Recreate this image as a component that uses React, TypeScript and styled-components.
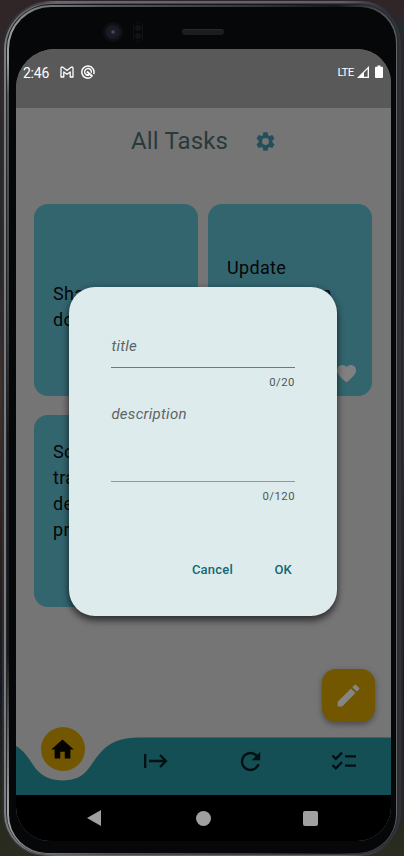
import React from "react";
import styled, { createGlobalStyle, css } from "styled-components";

const GlobalStyle = createGlobalStyle`
  html, body { margin: 0; padding: 0; }
  body { font-family: Roboto, "Liberation Sans", sans-serif; overflow: hidden; }
  * { box-sizing: border-box; }
`;

const Desktop = styled.div`
  width: 404px;
  height: 856px;
  padding: 1px 1px 0 2px;
  overflow: hidden;
  background:
    radial-gradient(circle at 404px 28px, #1f2c35 0, transparent 14px),
    linear-gradient(180deg, #2f2526 0, #30282a 90px, #292528 260px, #43302a 390px, #302019 540px, #141a25 690px, #26261b 790px, #2b2d20 100%);
`;

const OuterRim = styled.div`
  width: 401px;
  height: 855px;
  padding: 2px 2px 1px 2px;
  border-radius: 49px 42px 44px 44px;
  background: linear-gradient(90deg, #2c2d30 0, #44464a 40px, #6b6675 55px, #625d70 340px, #25272b 390px, #25282b 100%);
`;

const SilverRim = styled.div`
  height: 100%;
  padding: 1px 2px 1px 2px;
  border-radius: 47px 40px 42px 42px;
  background: linear-gradient(90deg, #7b7d81 0, #696b70 30px, #4a4852 100px, #393941 350px, #303236 100%);
`;

const DarkRim = styled.div`
  height: 100%;
  padding: 1px 2px 0 1px;
  border-radius: 45px 39px 41px 41px;
  background: linear-gradient(90deg, #252629 0, #17181b 40px, #17181b 300px, #2b2d30 100%);
`;

const InnerRim = styled.div`
  height: 100%;
  padding: 2px 1px 1px 2px;
  border-radius: 44px 37px 40px 40px;
  background:
    linear-gradient(180deg, transparent 55px, #535653 90px, #42443f 300px, #191a1b 430px, #19191b 650px, transparent 800px) left / 2px 100% no-repeat,
    linear-gradient(90deg, #a0a19e 0, #7d7e7d 25px, #565656 100px, #343434 250px, #17171a 330px, #626467 100%);
`;

const Bezel = styled.div`
  height: 100%;
  display: grid;
  grid-template-rows: 42px 792px;
  padding: 0 5px 0 7px;
  border-radius: 42px 36px 38px 38px;
  background: #060709;
`;

const SensorBar = styled.div`
  display: flex;
  align-items: flex-start;
  padding: 15px 0 0 87px;
`;

const Camera = styled.div`
  width: 20px;
  height: 20px;
  border-radius: 50%;
  background: radial-gradient(circle, #686b87 0, #272a42 1.5px, #151722 4px, #1d1e22 6px, #111216 7px, #0d0e11 10px);
`;

const Sensors = styled.div`
  display: flex;
  flex-direction: column;
  justify-content: space-between;
  width: 10px;
  height: 20px;
  margin-left: 10px;
  padding: 2px 1px;
  border-radius: 5px;
  border: 1px solid #121315;
`;

const SensorDot = styled.i`
  width: 6px;
  height: 6px;
  border-radius: 50%;
  background: #121315;
`;

const Speaker = styled.div`
  width: 42px;
  height: 6px;
  margin: 7px 0 0 39px;
  border-radius: 3px;
  background: #1d1d1e;
  border-top: 1px solid #2a2a2b;
`;

const Screen = styled.main`
  position: relative;
  width: 375px;
  display: grid;
  grid-template-rows: 59px 687px 46px;
  height: 792px;
  border-radius: 39px 34px 34px 34px;
  overflow: hidden;
  background: #757575;
`;

const StatusBar = styled.header`
  display: flex;
  align-items: flex-start;
  padding: 15px 8px 0 7px;
  color: #fff;
  background: #595959;
`;

const Clock = styled.time`
  width: 36.5px;
  font-size: 14px;
  line-height: 18px;
  letter-spacing: -0.25px;
`;

const StatusIcon = styled.svg<{ $w: number; $gap?: number }>`
  display: block;
  flex: none;
  width: ${(p) => p.$w}px;
  height: 14px;
  margin-left: ${(p) => p.$gap ?? 0}px;
  margin-top: 1px;
`;

const Network = styled.span`
  margin-left: auto;
  font-size: 11.5px;
  line-height: 17px;
  letter-spacing: -0.7px;
`;

const Content = styled.section`
  display: grid;
  grid-template-rows: 96px 403px 127px 61px;
  min-height: 0;
`;

const TitleRow = styled.div`
  display: flex;
  align-items: center;
  height: 66px;
  padding-left: 115px;
`;

const Title = styled.h1`
  width: 123px;
  margin: 0;
  color: #293a3b;
  font-size: 24px;
  font-weight: 400;
  line-height: 32px;
  letter-spacing: 0.15px;
  white-space: nowrap;
`;

const Icon = styled.svg<{ $size: number }>`
  display: block;
  flex: none;
  width: ${(p) => p.$size}px;
  height: ${(p) => p.$size}px;
`;

const CardGrid = styled.div`
  display: grid;
  grid-template-columns: 164px 164px;
  grid-auto-rows: 192px;
  gap: 18.7px 10px;
  padding: 0.2px 0 0 18px;
`;

const Card = styled.article<{ $top: number }>`
  display: flex;
  flex-direction: column;
  padding: ${(p) => p.$top}px 14px 11px 19px;
  border-radius: 14px;
  background: #33656f;
`;

const CardText = styled.p`
  margin: 0;
  color: #040708;
  font-size: 18px;
  line-height: 26px;
  letter-spacing: 0.35px;
  white-space: pre-line;
`;

const CardFooter = styled.div`
  display: flex;
  justify-content: flex-end;
  margin-top: auto;
`;

const FabRow = styled.div`
  display: flex;
  justify-content: flex-end;
  align-items: flex-start;
  padding: 62px 16px 0 0;
`;

const Fab = styled.button`
  display: grid;
  place-items: center;
  width: 53px;
  height: 53px;
  padding: 0;
  border: 0;
  border-radius: 14px;
  background: #725600;
  box-shadow: 0 3px 5px rgba(0, 0, 0, 0.26), 0 1px 8px rgba(0, 0, 0, 0.1);
`;

const TabBar = styled.nav`
  position: relative;
  display: grid;
  grid-template-columns: 93px 94px 94px 94px;
  padding-top: 4px;
`;

const Wave = styled.svg`
  position: absolute;
  inset: 0;
  width: 375px;
  height: 61px;
`;

const Tab = styled.button<{ $active?: boolean }>`
  position: relative;
  display: grid;
  place-items: center;
  height: 46px;
  padding: 0;
  border: 0;
  background: none;
  ${(p) =>
    p.$active &&
    css`
      width: 44px;
      height: 44px;
      margin: -11px 0 0 24.5px;
      border-radius: 50%;
      background: #725600;
    `}
`;

const SystemNav = styled.footer`
  display: flex;
  align-items: center;
  padding-left: 71px;
  background: #000;
`;

const NavBack = styled.i`
  width: 14px;
  height: 16px;
  background: #a0a0a0;
  clip-path: polygon(0 50%, 100% 0, 100% 100%);
`;

const NavHome = styled.i`
  width: 15px;
  height: 15px;
  margin-left: 94.6px;
  border-radius: 50%;
  background: #a0a0a0;
`;

const NavRecent = styled.i`
  width: 15px;
  height: 15px;
  margin-left: 92.4px;
  border-radius: 2px;
  background: #a0a0a0;
`;

const Dialog = styled.form`
  position: absolute;
  left: 53.4px;
  top: 238px;
  display: flex;
  flex-direction: column;
  width: 267.6px;
  height: 328.6px;
  padding: 44px 42px 0;
  border-radius: 26px;
  background: #deebec;
  box-shadow: 0 5px 7px rgba(0, 0, 0, 0.48), 0 1px 7px rgba(0, 0, 0, 0.3);
`;

const Field = styled.label<{ $h: number; $pad: number; $line: string }>`
  display: block;
  flex: none;
  height: ${(p) => p.$h}px;
  padding-top: ${(p) => p.$pad}px;
  border-bottom: 1px solid ${(p) => p.$line};
  color: #5c6566;
  font-size: 15px;
  font-style: italic;
  line-height: 20px;
  letter-spacing: 0.28px;
`;

const Counter = styled.span`
  flex: none;
  height: 16px;
  margin-top: 7px;
  text-align: right;
  color: #4b5859;
  font-size: 11.3px;
  line-height: 16px;
  letter-spacing: 0.5px;
`;

const Actions = styled.div`
  display: flex;
  justify-content: flex-end;
  gap: 41.5px;
  margin-top: 55px;
  padding-right: 3px;
`;

const Action = styled.button`
  padding: 0;
  border: 0;
  background: none;
  color: #126873;
  font: 500 13px/20px Roboto, "Liberation Sans", sans-serif;
  letter-spacing: 0.2px;
`;

const SettingsIcon = () => (
  <Icon $size={23} viewBox="0 0 24 24" fill="#234f5b">
    <path d="M19.14 12.94c.04-.3.06-.61.06-.94s-.02-.64-.07-.94l2.03-1.58a.49.49 0 0 0 .12-.61l-1.92-3.32a.49.49 0 0 0-.59-.22l-2.39.96a7 7 0 0 0-1.62-.94l-.36-2.54a.48.48 0 0 0-.48-.41h-3.84a.47.47 0 0 0-.47.41l-.36 2.54c-.59.24-1.13.57-1.62.94l-2.39-.96a.48.48 0 0 0-.59.22L2.74 8.87a.48.48 0 0 0 .12.61l2.03 1.58a6.5 6.5 0 0 0-.02 1.88l-2.03 1.58a.49.49 0 0 0-.12.61l1.92 3.32c.12.22.37.29.59.22l2.39-.96c.5.38 1.03.7 1.62.94l.36 2.54c.05.24.24.41.48.41h3.84c.24 0 .44-.17.47-.41l.36-2.54a7 7 0 0 0 1.62-.94l2.39.96c.22.08.47 0 .59-.22l1.92-3.32a.48.48 0 0 0-.12-.61zM12 15.6a3.6 3.6 0 1 1 0-7.2 3.6 3.6 0 0 1 0 7.2z" />
  </Icon>
);

export default function App() {
  return (
    <>
      <GlobalStyle />
      <Desktop>
        <OuterRim>
          <SilverRim>
            <DarkRim>
              <InnerRim>
                <Bezel>
                  <SensorBar>
                    <Camera />
                    <Sensors>
                      <SensorDot />
                      <SensorDot />
                    </Sensors>
                    <Speaker />
                  </SensorBar>
                  <Screen>
                    <StatusBar>
                      <Clock>2:46</Clock>
                      <StatusIcon $w={14} viewBox="0 0 14 14" fill="none" stroke="#fff" strokeWidth="1.3" strokeLinejoin="round">
                        <path d="M1 12V3.2Q1 1.3 2.9 2.3L7 5.5l4.1-3.2Q13 1.3 13 3.2V12h-2.8V6.9L7 9.3 3.8 6.9V12z" />
                      </StatusIcon>
                      <StatusIcon $w={14} $gap={7} viewBox="0 0 14 14" fill="none" stroke="#fff">
                        <path d="M10.2 12.2A6.1 6.1 0 1 1 12.7 9" strokeWidth="1.5" />
                        <path d="M4.6 9.3A3.4 3.4 0 1 1 10.3 7.8" strokeWidth="1.4" />
                        <path d="M6 6.5 11.5 11.5M4.5 9.3Q6.2 10.5 8 9.8" strokeWidth="1.9" />
                      </StatusIcon>
                      <Network>LTE</Network>
                      <StatusIcon $w={12} $gap={3} viewBox="0 0 12 14">
                        <path d="M0 13 12 1v12z" fill="#fff" />
                        <path d="M7 7.8v3.9h3.6V4.1z" fill="#595959" />
                      </StatusIcon>
                      <StatusIcon $w={8} $gap={6.5} viewBox="0 0 8 14">
                        <path d="M2.5 .5h3v1.2H7q1 0 1 1v9.300q0 1-1 1H1q-1 0-1-1V2.700q0-1 1-1h1.500z" fill="#fff" />
                      </StatusIcon>
                    </StatusBar>

                    <Content>
                      <TitleRow>
                        <Title>All Tasks</Title>
                        <SettingsIcon />
                      </TitleRow>

                      <CardGrid>
                        <Card $top={76.4}>
                          <CardText>{"Share project\ndocuments"}</CardText>
                        </Card>
                        <Card $top={50.4}>
                          <CardText>{"Update\npresentation"}</CardText>
                          <CardFooter>
                            <Icon $size={23} viewBox="0 0 24 24" fill="#808080">
                              <path d="m12 21.35-1.45-1.32C5.4 15.36 2 12.28 2 8.5 2 5.42 4.42 3 7.5 3c1.74 0 3.41.81 4.5 2.09C13.09 3.81 14.76 3 16.5 3 19.58 3 22 5.42 22 8.5c0 3.78-3.4 6.86-8.55 11.54z" />
                            </Icon>
                          </CardFooter>
                        </Card>
                        <Card $top={24.1}>
                          <CardText>{"Schedule\ntraining\ndesign\nproject"}</CardText>
                        </Card>
                      </CardGrid>

                      <FabRow>
                        <Fab aria-label="New task">
                          <Icon $size={29} viewBox="0 0 24 24" fill="#858585">
                            <path d="M3 17.25V21h3.75L17.81 9.94l-3.75-3.75zM20.71 7.04a1 1 0 0 0 0-1.41l-2.34-2.34a1 1 0 0 0-1.41 0l-1.83 1.83 3.75 3.75z" />
                          </Icon>
                        </Fab>
                      </FabRow>

                      <TabBar>
                        <Wave viewBox="0 0 375 61" aria-hidden="true">
                          <path d="M0 12C10 18 14 27 20 35C27 43 36 46.5 46.5 46.5S67 43 73 34C83 21 90 3.5 122 3.5H375V61H0Z" fill="#154f56" />
                        </Wave>
                        <Tab $active aria-label="Home">
                          <Icon $size={27} viewBox="0 0 24 24" fill="#050400">
                            <path d="M10 20v-6h4v6h5v-8h3L12 3 2 12h3v8z" />
                          </Icon>
                        </Tab>
                        <Tab aria-label="Upcoming">
                          <Icon $size={26} viewBox="0 0 26 26" fill="none" stroke="#021012" strokeWidth="2.3">
                            <path d="M2.2 6v14M6 13h17M17 7l6 6-6 6" />
                          </Icon>
                        </Tab>
                        <Tab aria-label="Refresh">
                          <Icon $size={29} viewBox="0 0 24 24" fill="#021012">
                            <path d="M17.65 6.35A7.95 7.95 0 0 0 12 4a8 8 0 1 0 7.73 10h-2.08A6 6 0 1 1 12 6c1.66 0 3.14.69 4.22 1.78L13 11h7V4z" />
                          </Icon>
                        </Tab>
                        <Tab aria-label="Completed">
                          <Icon $size={26} viewBox="0 0 26 26" fill="none" stroke="#021012" strokeWidth="2.3">
                            <path d="m1.5 7.5 3.3 3.3L11 4.6M1.5 17l3.3 3.3L11 14.1M14 8.3h11M14 17.7h11" />
                          </Icon>
                        </Tab>
                      </TabBar>
                    </Content>

                    <SystemNav>
                      <NavBack />
                      <NavHome />
                      <NavRecent />
                    </SystemNav>

                    <Dialog>
                      <Field $h={36.6} $pad={4.6} $line="#6d7a7b">title</Field>
                      <Counter>0/20</Counter>
                      <Field $h={91.6} $pad={13.4} $line="#8b9999">description</Field>
                      <Counter>0/120</Counter>
                      <Actions>
                        <Action type="button">Cancel</Action>
                        <Action type="button">OK</Action>
                      </Actions>
                    </Dialog>
                  </Screen>
                </Bezel>
              </InnerRim>
            </DarkRim>
          </SilverRim>
        </OuterRim>
      </Desktop>
    </>
  );
}
